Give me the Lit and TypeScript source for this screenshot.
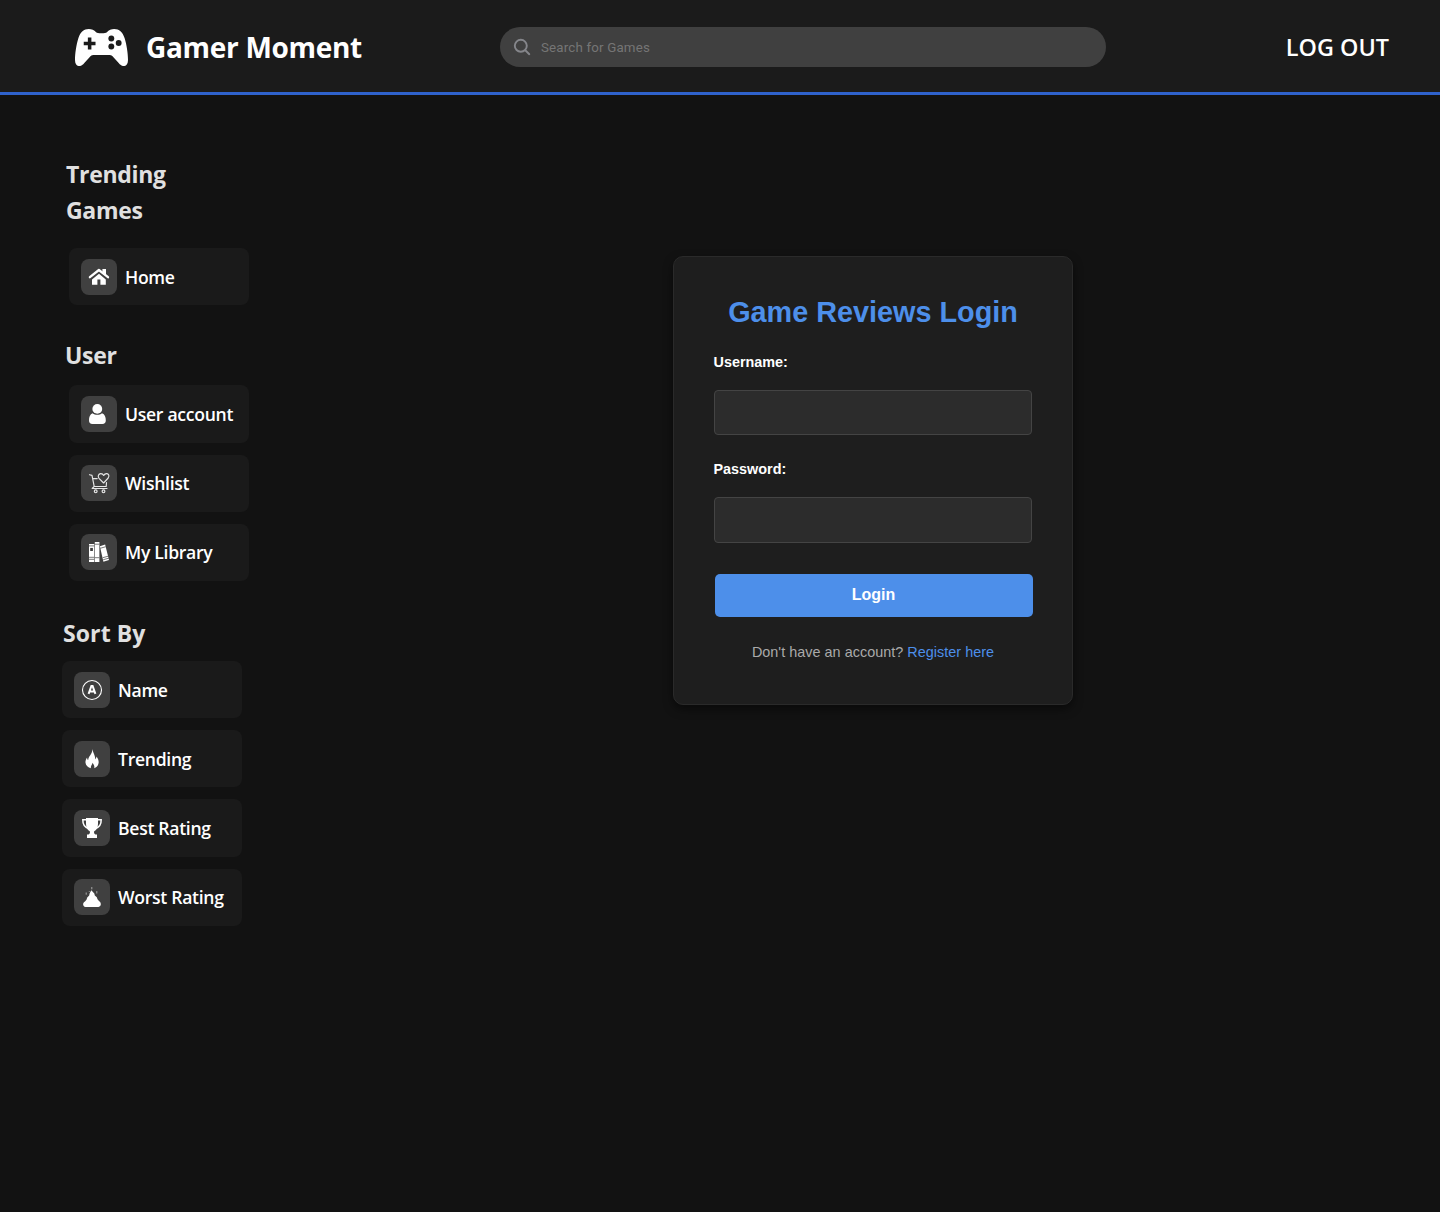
import { LitElement, html, svg, css, TemplateResult, SVGTemplateResult } from "lit";
import { customElement } from "lit/decorators.js";

interface NavItem {
  label: string;
  icon: string;
}

const icons: Record<string, SVGTemplateResult> = {
  home: svg`
    <path d="M10 6.8 16.8 12.4V17.8H11.4V12.6H8.400V17.8H3V12.400Z" fill="#fff" />
    <path d="M13.4 2H17V8.600L13.400 5.600Z" fill="#fff" />
    <path d="M.9 10.200 9.900 3 19 10.200" fill="none" stroke="#fff" stroke-width="2.300" stroke-linecap="round" stroke-linejoin="round" />`,
  user: svg`
    <circle cx="8.3" cy="4.9" r="4.9" fill="#fff" />
    <path d="M3.6 9.2C1 10.2 0 12.8 0 16.6 0 18.8 1.2 20 3.4 20H13.4C15.6 20 16.8 18.8 16.8 16.6 16.8 12.8 15.8 10.2 13 9.2 10.4 11.3 6.2 11.3 3.6 9.2Z" fill="#fff" />`,
  wishlist: svg`
    <g fill="none" stroke="#e6e6e6" stroke-width="1.15" stroke-linejoin="round" stroke-linecap="round">
      <path d="M.5 1.7 3 2.4 5.2 13.4 3.2 15.5H18M3.9 5.6H8.2M5.4 13.5H17.2L17.500 9.6" />
      <path d="M14.6 10 10 5.400C8.400 3.100 9.600 .8 11.700 .6 13.200 .5 14.200 1.500 14.700 2.500 15.200 1.500 16.400 .4 18 .6 20 .9 20.400 3.200 19.200 5Z" />
      <circle cx="6.700" cy="18.300" r="1.400" />
      <circle cx="14.500" cy="18.300" r="1.400" />
    </g>`,
  library: svg`
    <path d="M0 2H5.2V20H0ZM5.800 0H10.400V20H5.800Z" fill="#fff" />
    <path d="M10.900 4.200 16.100 2.600 20 17.900 14.400 19.700Z" fill="#fff" />
    <path d="M0 3.900H5.200M0 15.300H5.200M0 17.300H5.200M5.800 2.200H10.400M5.800 15.700H10.400M11.200 6.300 16.800 4.700M13.700 15.700 19.600 14.100M14.200 17.700 20 16.100" stroke="#555" stroke-width=".8" fill="none" />
    <path d="M1.200 5.900H3.900V9H1.200Z" fill="#404040" />`,
  name: svg`
    <circle cx="10" cy="10" r="9.500" fill="none" stroke="#fff" stroke-width="1.100" />
    <path d="M6.600 13.800 9.400 6H10.600L13.400 13.800M7.600 11.600H12.400" fill="none" stroke="#fff" stroke-width="2" />`,
  trending: svg`
    <path d="M10.300 0C11.100 3.500 12.100 4.900 12.800 7.200 13.200 8.500 13.200 9.700 12.900 10.500 13.900 9.800 14.300 8.900 14.500 7.600 16.200 9.900 16.900 12 16.600 14 16.200 16.800 14.200 18.500 12.100 19.300 12.800 17.600 12.100 15.800 10.500 13.700 10.300 16 8.200 16.900 9 19.300 6.100 18.600 3.800 16.700 3.500 13.800 3.300 11.800 4 10.100 5.100 8.500 5.200 10.100 5.400 10.700 6.200 11.100 6.300 7 10.600 5.400 10.300 0Z" fill="#fff" />`,
  trophy: svg`
    <path d="M4 0H16V6C16 9.700 14.300 12.300 12.200 13.300 11.700 14.900 12.300 16 13.500 16.500H15V20H5V16.500H6.500C7.700 16 8.300 14.900 7.800 13.300 5.700 12.300 4 9.700 4 6Z" fill="#fff" />
    <path d="M4.500 1.700H.8C.7 6.300 2.800 9.700 7.300 10.600M15.500 1.700H19.200C19.300 6.300 17.200 9.700 12.700 10.600" fill="none" stroke="#fff" stroke-width="1.500" />`,
  worst: svg`
    <path d="M9.300 3.200 12.300 6.400 12.800 8.500 14.800 10.200 15.500 12.300 17.200 14.300C19.400 15.400 19.600 19.700 16.500 19.900H3.500C.4 19.700 .5 15.500 3 14.500L4.600 12.500 5.200 10.500 7.200 8.600 7.600 6.400Z" fill="#fff" />
    <path d="M9.800 0V2.300M4.200 5.500V7.700M14.800 4.100V6.500M7.300 4V4.800" fill="none" stroke="#a7a7a7" stroke-width="1" />`,
};

@customElement("nav-group")
class NavGroup extends LitElement {
  static properties = { items: { attribute: false } };
  declare items: NavItem[];

  static styles = css`
    :host {
      display: flex;
      flex-direction: column;
      gap: 12px;
      width: 180px;
    }
    .item {
      display: flex;
      align-items: center;
      gap: 8px;
      box-sizing: border-box;
      height: 57.2px;
      padding: 0 12px;
      border-radius: 8px;
      background: #1a1a1a;
      color: #fff;
      font: 600 17.6px/24px "Open Sans", "Noto Sans", sans-serif;
      letter-spacing: -0.3px;
      white-space: nowrap;
      text-decoration: none;
    }
    .tile {
      display: flex;
      align-items: center;
      justify-content: center;
      flex: none;
      width: 36px;
      height: 36px;
      border-radius: 8px;
      background: #404040;
    }
    svg {
      width: 20px;
      height: 20px;
      overflow: visible;
    }
  `;

  render(): TemplateResult {
    return html`${this.items.map(
      (item) => html`<a class="item">
        <span class="tile"><svg viewBox="0 0 20 20">${icons[item.icon]}</svg></span>
        <span class="label">${item.label}</span>
      </a>`,
    )}`;
  }
}

@customElement("app-root")
class AppRoot extends LitElement {
  static styles = css`
    :host {
      display: flex;
      flex-direction: column;
      box-sizing: border-box;
      height: 1212px;
      background: #121212;
      color: #fff;
      overflow: hidden;
    }
    header {
      display: grid;
      grid-template-columns: 425px 606px 1fr;
      align-items: center;
      box-sizing: border-box;
      height: 95px;
      flex: none;
      padding: 2px 51px 0 75px;
      background: #1b1b1b;
      border-bottom: 3px solid #2f62cc;
    }
    .brand {
      display: flex;
      align-items: center;
      gap: 18px;
    }
    .pad {
      width: 53px;
      height: 37px;
    }
    .brand-name {
      font: 700 28px/40px "Open Sans", "Noto Sans", sans-serif;
      letter-spacing: -0.3px;
      white-space: nowrap;
    }
    .search {
      display: flex;
      align-items: center;
      gap: 10px;
      box-sizing: border-box;
      height: 40px;
      padding-left: 13px;
      border-radius: 20px;
      background: #404040;
      color: #757575;
      font: 400 13.33px/20px Roboto, "Liberation Sans", sans-serif;
      letter-spacing: 0.17px;
    }
    .search span {
      padding-top: 1px;
    }
    .search svg {
      width: 18px;
      height: 18px;
    }
    .logout {
      justify-self: end;
      font: 600 23.4px/32px "Open Sans", "Noto Sans", sans-serif;
      white-space: nowrap;
    }
    main {
      display: grid;
      grid-template-columns: 306px 1fr;
      align-items: start;
      flex: 1;
    }
    nav {
      padding: 61px 0 0 62px;
    }
    h2 {
      margin: 0;
      color: #e0e0e0;
      font: 700 23px/36px "Open Sans", "Noto Sans", sans-serif;
      letter-spacing: -0.3px;
    }
    .games {
      width: 120px;
      padding-left: 4px;
    }
    .user {
      padding: 32px 0 0 3px;
    }
    .sort {
      padding: 34px 0 0 1px;
      letter-spacing: 0.1px;
    }
    .inset {
      margin-left: 7px;
    }
    .home-list {
      margin-top: 20px;
    }
    .user-list {
      margin-top: 12.2px;
    }
    .sort-list {
      margin-top: 10px;
    }
    .card {
      justify-self: center;
      box-sizing: border-box;
      width: 400px;
      height: 449px;
      margin-top: 161px;
      padding: 36px 40px 0;
      background: #1e1e1e;
      border: 1px solid #2a2a2a;
      border-radius: 10px;
      box-shadow: 0 4px 10px rgba(0, 0, 0, 0.5);
      font-family: "Liberation Sans", Arial, sans-serif;
    }
    h1 {
      margin: 0;
      color: #4d8fea;
      font-size: 28.8px;
      line-height: 38px;
      text-align: center;
    }
    label {
      display: block;
      margin-left: -0.5px;
      font-size: 14.4px;
      font-weight: 700;
      line-height: 18px;
    }
    .name-label {
      margin-top: 22px;
    }
    .pass-label {
      margin-top: 25px;
    }
    input {
      display: block;
      box-sizing: border-box;
      width: 318px;
      height: 45.4px;
      margin-top: 19px;
      background: #2c2c2c;
      border: 1px solid #444;
      border-radius: 4px;
      outline: none;
    }
    button {
      display: block;
      box-sizing: border-box;
      width: 318px;
      height: 43px;
      margin: 31px 0 0 1px;
      padding: 0 1px 1px 0;
      border: 0;
      border-radius: 5px;
      background: #4d8fea;
      color: #fff;
      font: 700 16px/20px "Liberation Sans", Arial, sans-serif;
    }
    .register {
      margin: 26px 0 0;
      color: #aaa;
      font-size: 14.4px;
      line-height: 18px;
      letter-spacing: 0.03px;
      text-align: center;
      white-space: nowrap;
    }
    .register a {
      color: #4d8fea;
    }
  `;

  private home: NavItem[] = [{ label: "Home", icon: "home" }];
  private user: NavItem[] = [
    { label: "User account", icon: "user" },
    { label: "Wishlist", icon: "wishlist" },
    { label: "My Library", icon: "library" },
  ];
  private sort: NavItem[] = [
    { label: "Name", icon: "name" },
    { label: "Trending", icon: "trending" },
    { label: "Best Rating", icon: "trophy" },
    { label: "Worst Rating", icon: "worst" },
  ];

  render(): TemplateResult {
    return html`
      <header>
        <div class="brand">
          <svg class="pad" viewBox="0 0 54 37" preserveAspectRatio="none">
            <path
              d="M14 0C17 0 19.5 1.1 21.5 3.2 22.5 4.1 23.8 4.2 27 4.2 30.2 4.2 31.5 4.1 32.5 3.2 34.5 1.1 37 0 40 0 45 0 48.5 3 50.5 9 52.8 16 54 25 54 31 54 37.8 48.5 39 44.5 34L38 27C37 26.2 36 26 34.5 26H19.5C18 26 17 26.2 16 27L9.5 34C5.5 39 0 37.8 0 31 0 25 1.2 16 3.5 9 5.500 3 9 0 14 0Z"
              fill="#fff"
            />
            <path d="M14.900 8.500V20.500M8.900 14.500H20.900" stroke="#1b1b1b" stroke-width="3.600" />
            <g fill="#1b1b1b">
              <circle cx="37" cy="9.500" r="3" />
              <circle cx="44.500" cy="14" r="3" />
              <circle cx="37" cy="17.500" r="3" />
            </g>
          </svg>
          <span class="brand-name">Gamer Moment</span>
        </div>
        <div class="search">
          <svg viewBox="0 0 18 18" fill="none" stroke="#85868b" stroke-width="1.9" stroke-linecap="round">
            <circle cx="7.8" cy="7.8" r="6" />
            <path d="M12.300 12.300 16.300 16.200" />
          </svg>
          <span>Search for Games</span>
        </div>
        <span class="logout">LOG OUT</span>
      </header>
      <main>
        <nav>
          <h2 class="games">Trending Games</h2>
          <nav-group class="inset home-list" .items=${this.home}></nav-group>
          <h2 class="user">User</h2>
          <nav-group class="inset user-list" .items=${this.user}></nav-group>
          <h2 class="sort">Sort By</h2>
          <nav-group class="sort-list" .items=${this.sort}></nav-group>
        </nav>
        <section class="card">
          <h1>Game Reviews Login</h1>
          <label class="name-label" for="username">Username:</label>
          <input id="username" type="text" />
          <label class="pass-label" for="password">Password:</label>
          <input id="password" type="password" />
          <button type="button">Login</button>
          <p class="register">Don't have an account? <a>Register here</a></p>
        </section>
      </main>
    `;
  }
}
